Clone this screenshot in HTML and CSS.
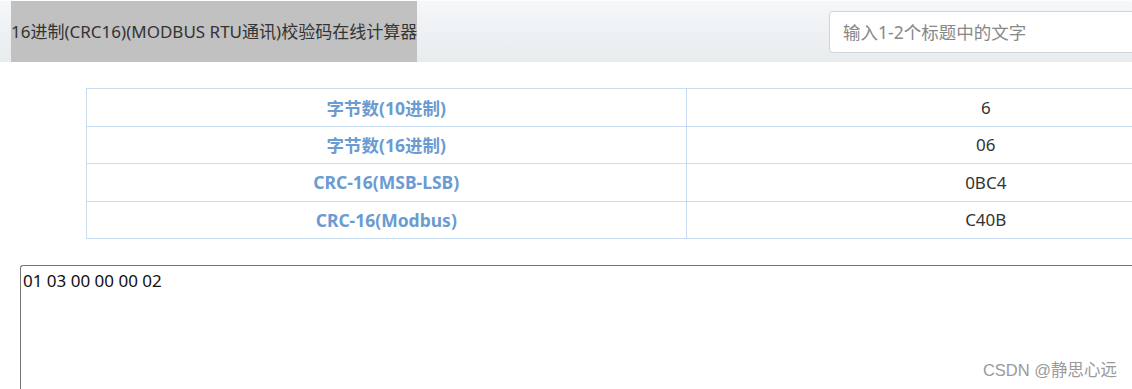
FILE: index.html
```html
<!DOCTYPE html>
<html lang="zh-CN">
<head>
	<meta charset="UTF-8">
	<title>16进制(CRC16)(MODBUS RTU通讯)校验码在线计算器</title>
	<link rel="stylesheet" href="styles.css">
</head>
<body>
	<div class="header">
		<div class="title-col">
			<h1 class="title">16进制(CRC16)(MODBUS RTU通讯)校验码在线计算器</h1>
		</div>
		<input class="search" type="text" placeholder="输入1-2个标题中的文字">
	</div>

	<table class="result">
		<tr>
			<th>字节数(10进制)</th>
			<td>6</td>
		</tr>
		<tr>
			<th>字节数(16进制)</th>
			<td>06</td>
		</tr>
		<tr>
			<th>CRC-16(MSB-LSB)</th>
			<td>0BC4</td>
		</tr>
		<tr>
			<th>CRC-16(Modbus)</th>
			<td>C40B</td>
		</tr>
	</table>

	<div class="input-box">
		<textarea class="hex-input">01 03 00 00 00 02</textarea>
	</div>

	<div class="watermark">CSDN @静思心远</div>
</body>
</html>
```

FILE: styles.css
```css
body {
	margin: 0;
	background: #fff;
	font-family: "Noto Sans", "Noto Sans CJK SC", sans-serif;
	color: #333;
	overflow: hidden;
	position: relative;
	height: 389px;
}
.header {
	display: grid;
	grid-template-columns: 829px 1fr;
	align-items: center;
	height: 62px;
	background: linear-gradient(to bottom, #f5f7f9, #e7ecef);
	border-top: 1px solid #fbfcfd;
	box-sizing: border-box;
}
.title-col {
	height: 61px;
	padding-left: 11px;
}
.title {
	display: inline-block;
	margin: 0;
	height: 61px;
	line-height: 62px;
	background: #c1c1c1;
	font-size: 17px;
	font-weight: normal;
	color: #333;
	white-space: nowrap;
}
.search {
	width: 320px;
	height: 42px;
	box-sizing: border-box;
	border: 1px solid #d0d4d8;
	border-radius: 4px;
	padding: 0 13px;
	font-family: inherit;
	font-size: 17.5px;
	color: #333;
	background: #fff;
	outline: none;
}
.search::placeholder {
	color: #888;
}
.result {
	margin: 26px 0 0 86px;
	width: 1200px;
	border-collapse: collapse;
	font-size: 17px;
}
.result th,
.result td {
	width: 50%;
	height: 37.5px;
	padding: 0;
	border: 1px solid #c9ddf2;
	text-align: center;
	box-sizing: border-box;
}
.result th {
	color: #6a9bd1;
	font-weight: bold;
	font-size: 17.5px;
}
.result td {
	color: #333;
}
.input-box {
	padding: 26px 0 0 20px;
}
.hex-input {
	display: block;
	width: 1120px;
	height: 124px;
	box-sizing: border-box;
	border: 1px solid #767676;
	border-right: 0;
	border-bottom: 0;
	border-radius: 3px 0 0 0;
	padding: 4px 2px;
	font-family: "Noto Sans", "Noto Sans CJK SC", sans-serif;
	font-size: 17px;
	line-height: 22px;
	color: #111;
	resize: none;
	outline: none;
}
.watermark {
	position: absolute;
	right: 15px;
	bottom: 8px;
	font-size: 16.5px;
	color: #9a9a9a;
	font-family: "Liberation Sans", "Noto Sans CJK SC", sans-serif;
}
```
